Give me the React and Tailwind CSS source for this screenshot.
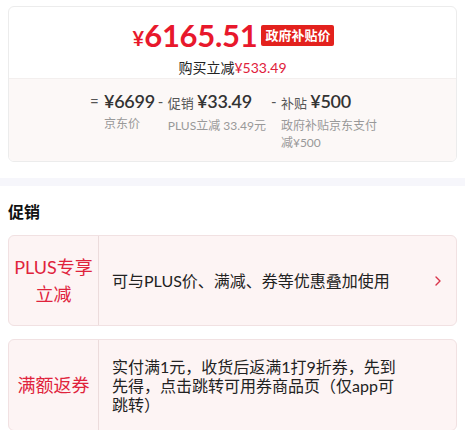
import React from "react";

const F = { fontFamily: "Lato, 'Noto Sans CJK SC', sans-serif" };

function Chevron() {
  return (
    <svg width="8" height="12" viewBox="0 0 8 12" fill="none">
      <path d="M2 2 L6 6 L2 10" stroke="#d9344a" strokeWidth="1.4" strokeLinecap="round" strokeLinejoin="round" />
    </svg>
  );
}

export default function App() {
  return (
    <div className="w-[465px] h-[430px] bg-white overflow-hidden" style={F}>
      <div className="px-2 pt-[6px]">
        <div className="border border-[#ececec] rounded-md overflow-hidden">
          <div className="h-[71px] flex flex-col items-center pt-[13px]">
            <div className="flex items-center text-[#e8182c] pl-[2px]">
              <span className="text-[20px] font-bold leading-none mt-[4px]">¥</span>
              <span className="text-[31px] font-bold leading-none tracking-[-0.3px]">6165.51</span>
              <span className="ml-[4px] bg-[#e3211d] text-white text-[13px] font-bold leading-none h-[21px] px-[4px] flex items-center rounded-[2px]">政府补贴价</span>
            </div>
            <div className="mt-[8px] text-[14px] leading-[18px]">
              <span className="text-[#222]">购买立减</span>
              <span className="text-[#e0203a]">¥533.49</span>
            </div>
          </div>
          <div className="h-[83px] bg-[#fcf8f7] border-t border-[#f3efee] flex justify-center pt-[10px] pl-[6px] gap-[3px]">
            <div className="flex">
              <span className="w-[14px] text-[15px] text-[#555] leading-[24px]">=</span>
              <div className="flex flex-col">
                <span className="text-[18px] font-semibold text-[#333] leading-[24px] tracking-[-0.3px]">¥6699</span>
                <span className="text-[12px] text-[#999] leading-[17px] mt-[2px]">京东价</span>
              </div>
            </div>
            <div className="flex">
              <span className="w-[10px] text-[15px] text-[#555] leading-[24px]">-</span>
              <div className="flex flex-col">
                <span className="leading-[24px]">
                  <span className="text-[13px] text-[#555]">促销 </span>
                  <span className="text-[18px] font-semibold text-[#333] tracking-[-0.3px]">¥33.49</span>
                </span>
                <span className="text-[12px] text-[#999] leading-[17px] mt-[2px]">PLUS立减 33.49元</span>
              </div>
            </div>
            <div className="flex ml-[2px]">
              <span className="w-[10px] text-[15px] text-[#555] leading-[24px]">-</span>
              <div className="flex flex-col w-[100px]">
                <span className="leading-[24px] whitespace-nowrap">
                  <span className="text-[13px] text-[#555]">补贴 </span>
                  <span className="text-[18px] font-semibold text-[#333] tracking-[-0.3px]">¥500</span>
                </span>
                <span className="text-[12px] text-[#999] leading-[17px] mt-[2px]">政府补贴京东支付减¥500</span>
              </div>
            </div>
          </div>
        </div>
      </div>

      <div className="mt-[16px] h-[8px] bg-[#f6f6fb]" />

      <div className="px-2">
        <div className="mt-[15px] text-[16px] font-bold text-[#111] leading-[22px]">促销</div>

        <div className="mt-[12px] h-[91px] flex bg-[#fdf4f4] border border-[#f1e1e2] rounded-md">
          <div className="w-[90px] flex items-center justify-center text-center text-[18px] leading-[27px] text-[#e0233c] border-r border-[#ecdcdc] px-[4px]">
            PLUS专享立减
          </div>
          <div className="flex-1 flex items-center pl-[13px] pr-[14px]">
            <span className="flex-1 text-[16px] text-[#222] leading-[20px]">可与PLUS价、满减、券等优惠叠加使用</span>
            <Chevron />
          </div>
        </div>

        <div className="mt-[13px] h-[92px] flex bg-[#fdf4f4] border border-[#f1e1e2] rounded-md">
          <div className="w-[90px] flex items-center justify-center text-center text-[18px] leading-[27px] text-[#e0233c] border-r border-[#ecdcdc]">
            满额返券
          </div>
          <div className="flex-1 flex items-center pl-[13px]">
            <span className="w-[288px] text-[16px] text-[#222] leading-[19px]">实付满1元，收货后返满1打9折券，先到先得，点击跳转可用券商品页（仅app可跳转）</span>
          </div>
        </div>
      </div>
    </div>
  );
}
